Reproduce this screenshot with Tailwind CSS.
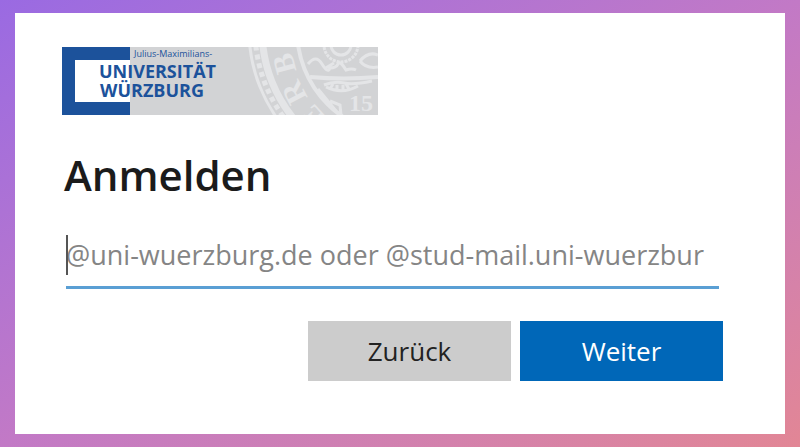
<!DOCTYPE html>
<html lang="de">
<head>
    <meta charset="UTF-8">
    <meta name="viewport" content="width=device-width, initial-scale=1.0">
    <title>Anmelden</title>
    <script src="https://cdn.jsdelivr.net/npm/@tailwindcss/browser@4"></script>
</head>
<body class="min-h-screen flex bg-linear-to-br from-[#9a6ae2] via-[#c279c6] to-[#e28695] px-[15px] py-[13px] font-['Open_Sans',sans-serif]">
    <main class="flex-1 bg-white pt-[34px] pl-[47px] pr-[62px]">
        <!-- Logo -->
        <svg class="block w-[316px] h-[68px]" viewBox="0 0 316 68" role="img" aria-label="Julius-Maximilians-Universität Würzburg">
            <rect width="316" height="68" fill="#d2d3d5"/>
            <!-- Seal -->
            <g fill="none" stroke="#e4e5e7">
                <circle cx="340" cy="-17" r="153" stroke-width="3"/>
                <circle cx="340" cy="-17" r="147" stroke-width="5" stroke-dasharray="5 4"/>
                <circle cx="340" cy="-17" r="140" stroke-width="7"/>
                <circle cx="340" cy="-17" r="105" stroke-width="4"/>
                <circle cx="279" cy="-2" r="17" stroke-width="3" stroke-dasharray="3 1"/>
                <circle cx="279" cy="-2" r="10" stroke-width="3"/>
                <path d="M248 30q34 3 68 0" stroke-width="4"/>
                <path d="M246 17q8-10 14 0t8 4q6 0 8-4t8 6q6-2 10 0M298 14q8-10 18-6M298 14q6 8 18 6M262 22l10-6M262 38q10-4 20-2t28-2M264 40q16 8 32-1M268 42l3-5m4 6v-5m6 5v-5m6 4l-3-5M256 42l18 22M268 54l10 4l1 10" stroke-width="3"/>
            </g>
            <g fill="#e4e5e7" font-family="Liberation Serif, serif" font-weight="700" text-anchor="middle">
                <text font-size="30" transform="translate(232 14) rotate(-105)">B</text>
                <text font-size="30" transform="translate(241 41) rotate(-118)">R</text>
                <text font-size="30" transform="translate(258 63) rotate(-132)">E</text>
                <text x="299" y="64" font-size="24">15</text>
            </g>
            <path d="M0 0H68V13H13V55H68V68H0Z" fill="#1c529b"/>
            <rect x="13" y="13" width="55" height="42" fill="#fff"/>
            <g fill="#1c529b" font-family="Open Sans, sans-serif">
                <text x="72" y="10" font-size="9">Julius-Maximilians-</text>
                <text x="37" y="31" font-size="18" font-weight="700">UNIVERSITÄT</text>
                <text x="38" y="50" font-size="18" font-weight="700">WÜRZBURG</text>
            </g>
        </svg>

        <form>
            <h1 class="mt-8 ml-0.5 text-[42px] leading-14 font-semibold text-[#1b1b1b]">Anmelden</h1>

            <!-- Login name -->
            <div class="relative mt-6 mx-1">
                <input type="text" aria-label="Benutzername" placeholder="@uni-wuerzburg.de oder @stud-mail.uni-wuerzbur" class="block w-full h-[62px] pb-1 border-b-3 border-[#5a9fd4] text-[27px] text-[#1b1b1b] placeholder:text-[#858585] outline-none">
                <span class="absolute left-0 top-2 w-0.5 h-10 bg-[#555]"></span>
            </div>

            <!-- Buttons -->
            <div class="mt-8 flex justify-end gap-[9px] text-[26px]">
                <button type="button" class="w-[203px] h-[60px] bg-[#ccc] text-[#222]">Zurück</button>
                <button type="submit" class="w-[203px] h-[60px] bg-[#0067b8] font-medium text-white">Weiter</button>
            </div>
        </form>
    </main>
</body>
</html>
